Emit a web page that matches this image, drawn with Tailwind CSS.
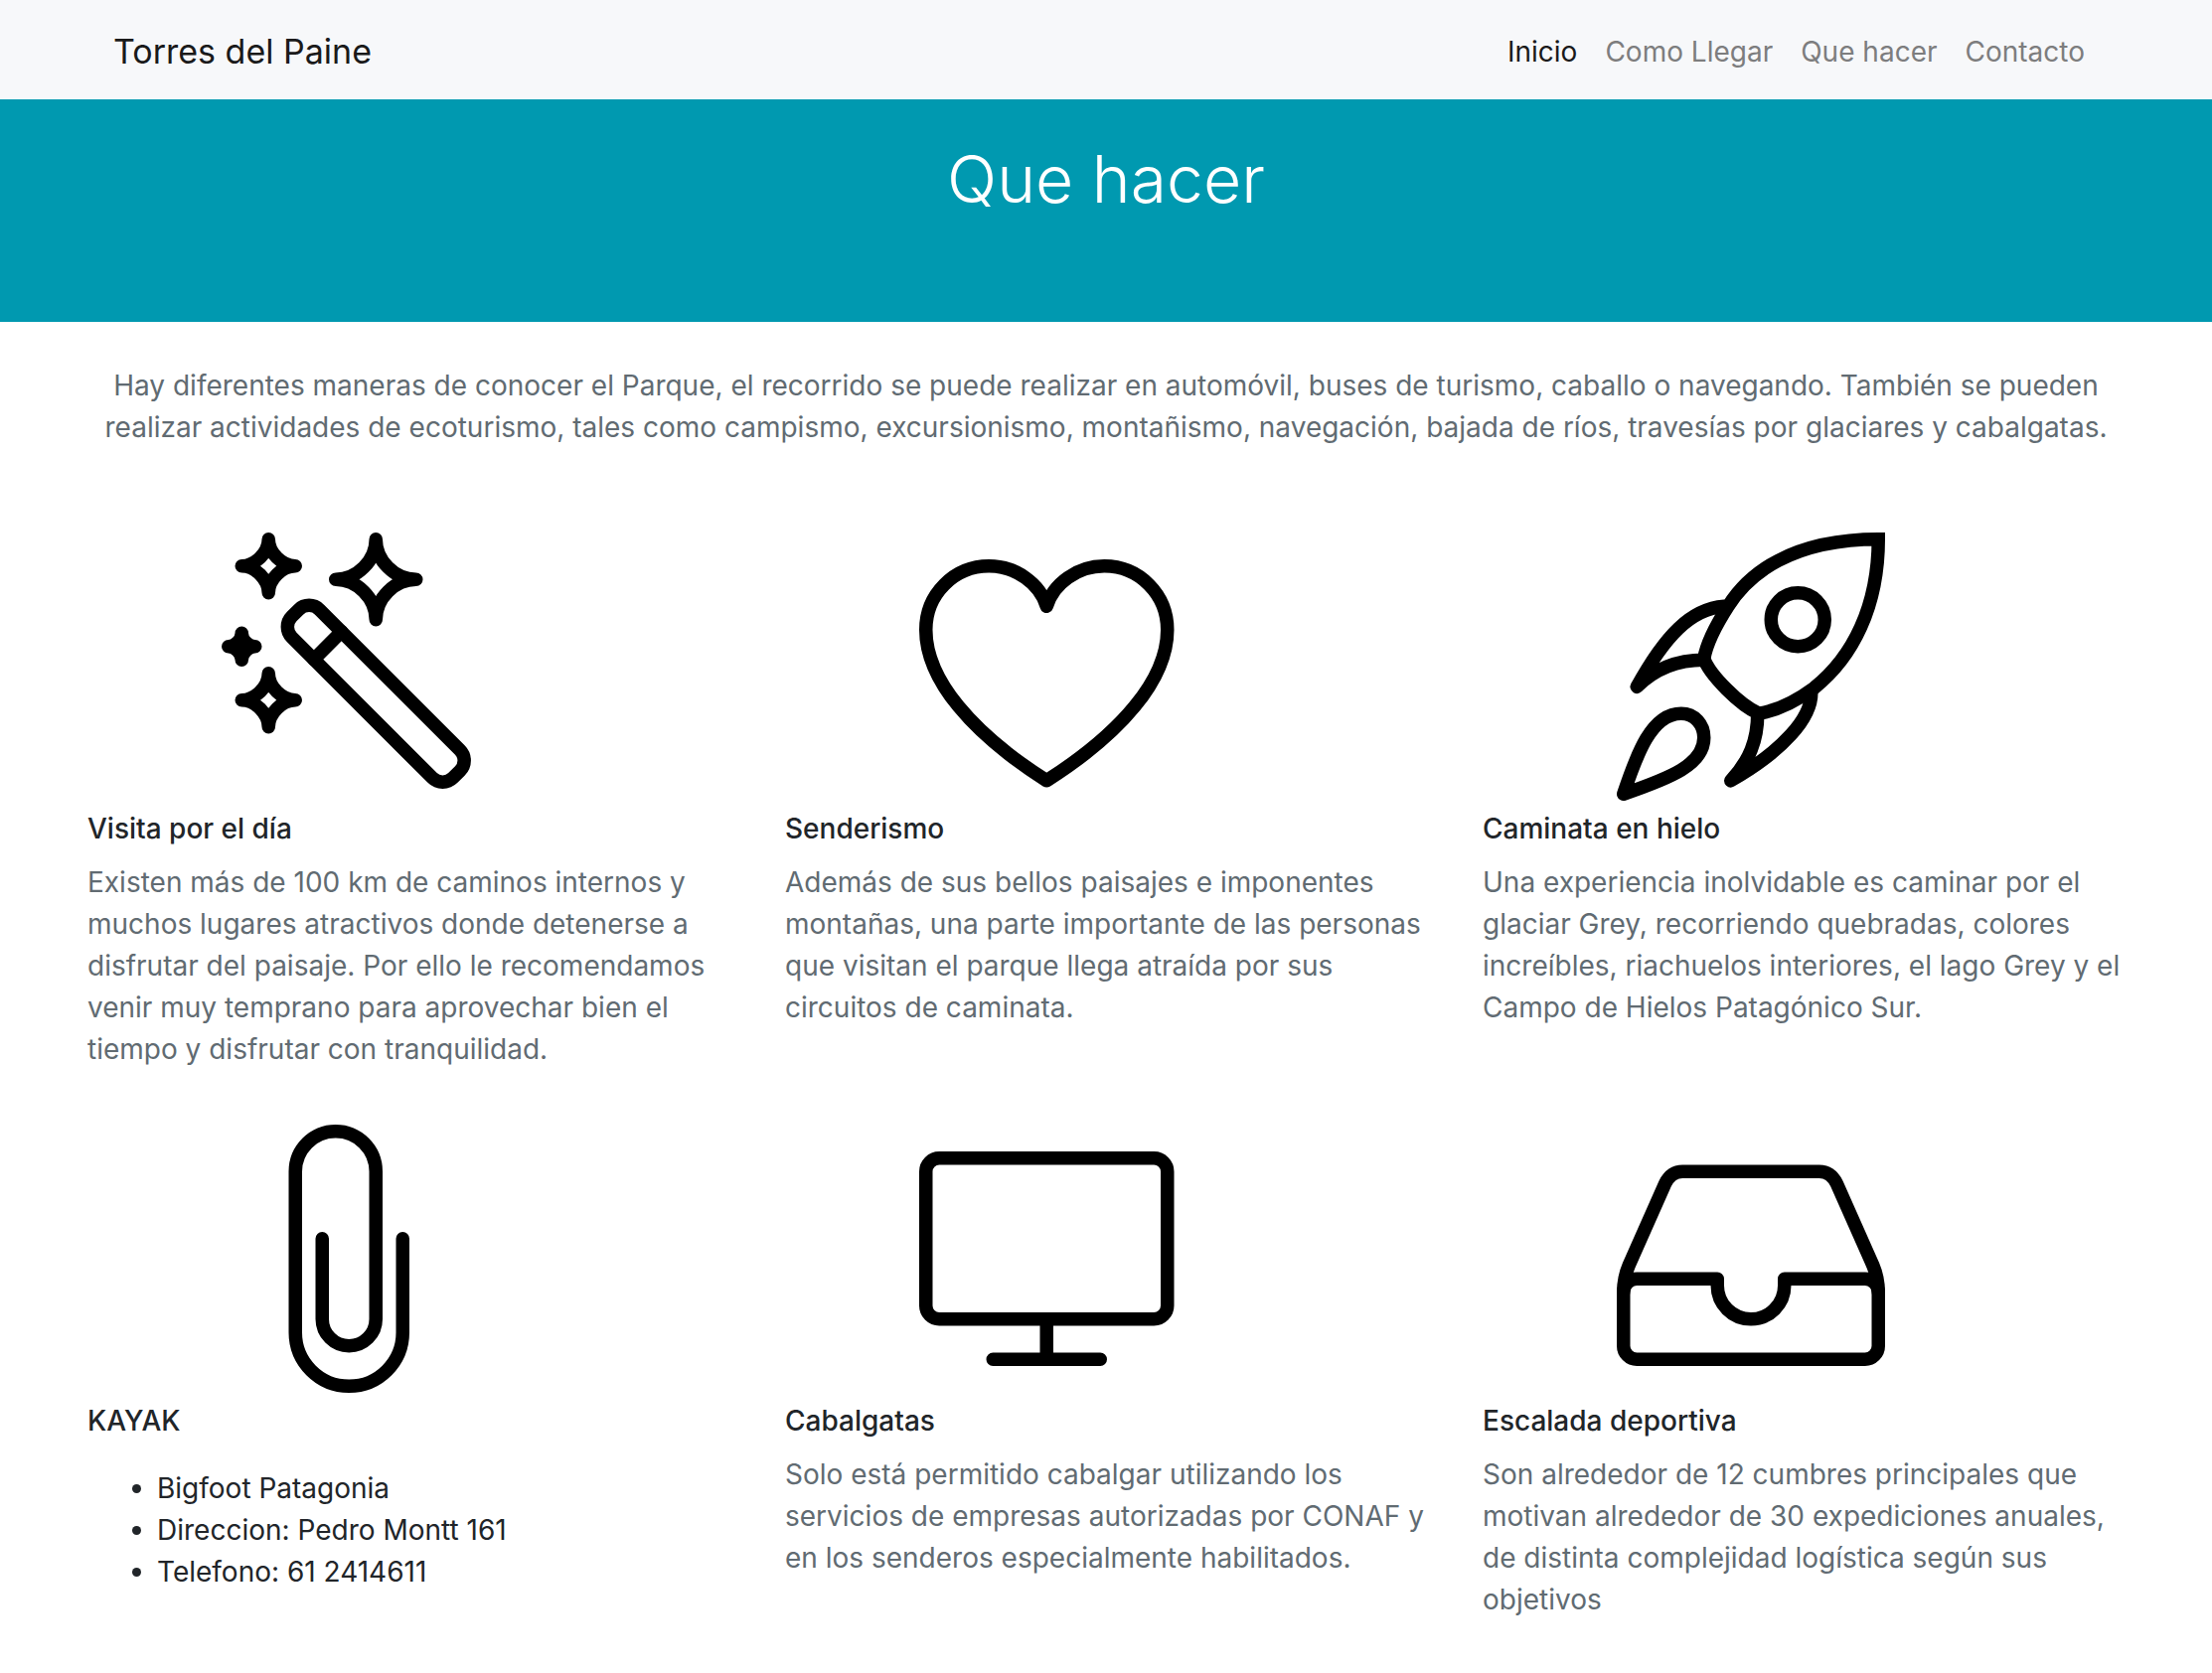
<!DOCTYPE html>
<html lang="es">
<head>
<meta charset="utf-8">
<meta name="viewport" content="width=device-width, initial-scale=1">
<title>Torres del Paine - Que hacer</title>
<script src="https://cdn.jsdelivr.net/npm/@tailwindcss/browser@4"></script>
</head>
<body class="bg-white font-['Inter',sans-serif] text-[28px] leading-[42px] text-[#212529]">

<nav class="flex min-h-[100px] items-center justify-between bg-[#f7f8fa] px-[114px] pt-1">
  <a href="#" class="text-[34px] text-[#1a1a1a]">Torres del Paine</a>
  <ul class="flex gap-7 pr-3.5">
    <li><a href="#" class="text-[#1a1a1a]">Inicio</a></li>
    <li><a href="#" class="text-[#7d7d7e]">Como Llegar</a></li>
    <li><a href="#" class="text-[#7d7d7e]">Que hacer</a></li>
    <li><a href="#" class="text-[#7d7d7e]">Contacto</a></li>
  </ul>
</nav>

<header class="bg-[#0099b0] pt-[38px] pb-[102px] text-center">
  <h1 class="text-[66px] leading-[84px] font-light text-white">Que hacer</h1>
</header>

<main class="px-[88px] pb-12">
  <p class="pt-[43px] text-center text-[#616b72]">Hay diferentes maneras de conocer el Parque, el recorrido se puede realizar en automóvil, buses de turismo, caballo o navegando. También se pueden realizar actividades de ecoturismo, tales como campismo, excursionismo, montañismo, navegación, bajada de ríos, travesías por glaciares y cabalgatas.</p>

  <div class="mt-[85px] grid grid-cols-3 gap-x-14 gap-y-[55px]">

    <section>
      <svg class="ml-[135px] size-[270px]" viewBox="0 0 20 20" fill="none" stroke="#000" stroke-linecap="round" stroke-linejoin="round" aria-hidden="true">
        <path d="M3.5.5C3.5 1.5 2.5 2.5 1.5 2.5C2.5 2.5 3.5 3.5 3.5 4.5C3.5 3.5 4.5 2.5 5.5 2.5C4.5 2.5 3.5 1.5 3.5.5z"/>
        <path d="M11.5.5C11.5 2.1 10.1 3.5 8.5 3.5C10.1 3.5 11.5 4.9 11.5 6.5C11.5 4.9 12.9 3.5 14.5 3.5C12.9 3.5 11.5 2.1 11.5.5z"/>
        <path fill="#000" d="M1.5 7.5C1.5 8 1 8.5.5 8.5C1 8.5 1.5 9 1.5 9.5C1.5 9 2 8.5 2.5 8.5C2 8.5 1.5 8 1.5 7.5z"/>
        <path d="M3.5 10.5C3.5 11.5 2.5 12.5 1.5 12.5C2.5 12.5 3.5 13.5 3.5 14.5C3.5 13.5 4.5 12.5 5.5 12.5C4.5 12.5 3.5 11.5 3.5 10.5z"/>
        <g transform="translate(11.5 12.02) rotate(45)">
          <rect x="-8.5" y="-1.46" width="17" height="2.92" rx="1.1"/>
          <path d="M-5.08-1.46V1.46"/>
        </g>
      </svg>
      <h5 class="mt-[11px] leading-[34px] font-medium">Visita por el día</h5>
      <p class="mt-4 text-[#616b72]">Existen más de 100 km de caminos internos y muchos lugares atractivos donde detenerse a disfrutar del paisaje. Por ello le recomendamos venir muy temprano para aprovechar bien el tiempo y disfrutar con tranquilidad.</p>
    </section>

    <section>
      <svg class="ml-[135px] size-[270px]" viewBox="0 0 20 20" fill="none" stroke="#000" stroke-linecap="round" stroke-linejoin="round" aria-hidden="true">
        <path d="M9.5 18.5C4 15 .5 11 .5 7.25C.5 4.6 2.6 2.5 5.2 2.5C7.2 2.5 9 3.8 9.5 5.5C10 3.8 11.8 2.5 13.8 2.5C16.4 2.5 18.5 4.6 18.5 7.25C18.5 11 15 15 9.5 18.5z"/>
      </svg>
      <h5 class="mt-[11px] leading-[34px] font-medium">Senderismo</h5>
      <p class="mt-4 text-[#616b72]">Además de sus bellos paisajes e imponentes montañas, una parte importante de las personas que visitan el parque llega atraída por sus circuitos de caminata.</p>
    </section>

    <section>
      <svg class="ml-[135px] size-[270px]" viewBox="0 0 20 20" fill="none" stroke="#000" stroke-linecap="round" stroke-linejoin="round" aria-hidden="true">
        <path stroke-linejoin="miter" d="M19.5.5C13 .5 9.8 3.1 8.3 5.5C7.2 7.2 6.7 8.3 6.5 9.4C6.9 10.6 9.2 12.9 10.6 13.5C11.8 13.3 13.2 12.7 14.7 11.6C17.6 9.3 19.5 5.5 19.5.5z"/>
        <circle cx="13.5" cy="6.5" r="2"/>
        <path d="M8 5.5C5.5 5.7 3.6 7.7 1.5 11.5C2.9 10.1 4.6 9.5 6.5 9.5"/>
        <path d="M10.5 13.5C10.5 15.5 9.9 17 8.5 18.5C12.5 16.2 14.5 13.8 14.5 12"/>
        <path d="M.5 19.5C1.5 16.5 2.6 13.5 4.8 13.5C5.8 13.5 6.5 14.3 6.5 15.3C6.5 17.3 4 18.3.5 19.5z"/>
      </svg>
      <h5 class="mt-[11px] leading-[34px] font-medium">Caminata en hielo</h5>
      <p class="mt-4 text-[#616b72]">Una experiencia inolvidable es caminar por el glaciar Grey, recorriendo quebradas, colores increíbles, riachuelos interiores, el lago Grey y el Campo de Hielos Patagónico Sur.</p>
    </section>

    <section>
      <svg class="ml-[135px] size-[270px]" viewBox="0 0 20 20" fill="none" stroke="#000" stroke-linecap="round" stroke-linejoin="round" aria-hidden="true">
        <path d="M7.5 8.5V14.5a2 2 0 0 0 4 0V3.5a3 3 0 0 0-6 0V15.5a4 4 0 0 0 8 0V8.5"/>
      </svg>
      <h5 class="mt-[11px] leading-[34px] font-medium">KAYAK</h5>
      <ul class="mt-[30px] list-disc pl-[70px]">
        <li>Bigfoot Patagonia</li>
        <li>Direccion: Pedro Montt 161</li>
        <li>Telefono: 61 2414611</li>
      </ul>
    </section>

    <section>
      <svg class="ml-[135px] size-[270px]" viewBox="0 0 20 20" fill="none" stroke="#000" stroke-linecap="round" stroke-linejoin="round" aria-hidden="true">
        <rect x=".5" y="2.5" width="18" height="12" rx="1"/>
        <path d="M9.5 14.5V17.5M5.5 17.5H13.5"/>
      </svg>
      <h5 class="mt-[11px] leading-[34px] font-medium">Cabalgatas</h5>
      <p class="mt-4 text-[#616b72]">Solo está permitido cabalgar utilizando los servicios de empresas autorizadas por CONAF y en los senderos especialmente habilitados.</p>
    </section>

    <section>
      <svg class="ml-[135px] size-[270px]" viewBox="0 0 20 20" fill="none" stroke="#000" stroke-linecap="round" stroke-linejoin="round" aria-hidden="true">
        <path d="M.5 12.5V16.5a1 1 0 0 0 1 1H18.5a1 1 0 0 0 1-1V12.5C19.5 11.8 19.4 11.2 19.1 10.5L16.4 4.4C16.1 3.8 15.7 3.5 15.1 3.5H4.9C4.3 3.5 3.9 3.8 3.6 4.4L.9 10.5C.6 11.2.5 11.8.5 12.5z"/>
        <path d="M.5 12.5a1 1 0 0 1 1-1H7.5V12a2.5 2.5 0 0 0 5 0V11.5H18.5a1 1 0 0 1 1 1"/>
      </svg>
      <h5 class="mt-[11px] leading-[34px] font-medium">Escalada deportiva</h5>
      <p class="mt-4 text-[#616b72]">Son alrededor de 12 cumbres principales que motivan alrededor de 30 expediciones anuales, de distinta complejidad logística según sus objetivos</p>
    </section>

  </div>
</main>
</body>
</html>
